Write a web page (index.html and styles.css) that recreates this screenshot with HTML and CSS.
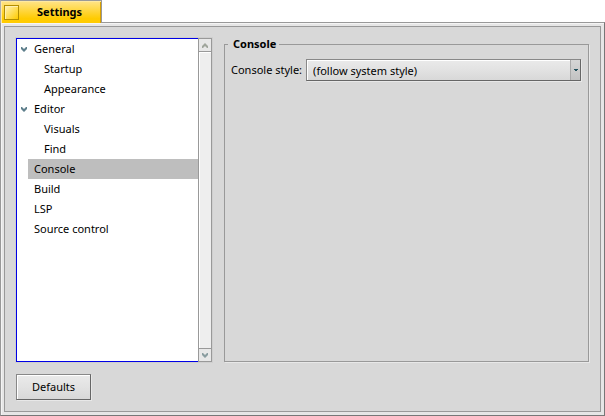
FILE: index.html
```html
<!DOCTYPE html>
<html lang="en">
<head>
<meta charset="utf-8">
<title>Settings</title>
<link rel="stylesheet" href="styles.css">
</head>
<body>
<div class="window">
  <header class="tab">
    <button class="close" aria-label="Close"></button>
    <h1 class="title">Settings</h1>
  </header>
  <div class="frame">
    <main class="content">
      <div class="panes">
        <nav class="tree" aria-label="Categories">
          <ul class="items">
            <li class="item parent"><svg class="arrow" viewBox="0 0 6 5"><path d="M0 0H1L3 2L5 0H6V2L3 5L0 2Z"/></svg><span class="name">General</span></li>
            <li class="item child"><span class="name">Startup</span></li>
            <li class="item child"><span class="name">Appearance</span></li>
            <li class="item parent"><svg class="arrow" viewBox="0 0 6 5"><path d="M0 0H1L3 2L5 0H6V2L3 5L0 2Z"/></svg><span class="name">Editor</span></li>
            <li class="item child"><span class="name">Visuals</span></li>
            <li class="item child"><span class="name">Find</span></li>
            <li class="item selected"><span class="name">Console</span></li>
            <li class="item"><span class="name">Build</span></li>
            <li class="item"><span class="name">LSP</span></li>
            <li class="item"><span class="name">Source control</span></li>
          </ul>
          <div class="scrollbar">
            <button class="step" aria-label="Scroll up"><svg class="step-arrow" viewBox="0 0 6 5"><path d="M0 5H1L3 3L5 5H6V3L3 0L0 3Z"/></svg></button>
            <div class="track"></div>
            <button class="step" aria-label="Scroll down"><svg class="step-arrow down" viewBox="0 0 6 5"><path d="M0 0H1L3 2L5 0H6V2L3 5L0 2Z"/></svg></button>
          </div>
        </nav>
        <fieldset class="group">
          <legend class="legend">Console</legend>
          <div class="field">
            <label class="label" for="style">Console style:</label>
            <div class="menu">
              <select class="select" id="style"><option>(follow system style)</option></select>
              <span class="menu-end"><svg class="menu-arrow" viewBox="0 0 4 2"><path d="M0 0H4V1H3V2H1V1H0Z"/></svg></span>
            </div>
          </div>
        </fieldset>
      </div>
      <button class="defaults">Defaults</button>
    </main>
  </div>
</div>
</body>
</html>
```
FILE: styles.css
```css
* { box-sizing: border-box; }
body {
  margin: 0;
  background: #fff;
  color: #000;
  font: 11px/20px "Noto Sans", sans-serif;
}
button, select { font: inherit; color: inherit; margin: 0; }
.window { display: flex; flex-direction: column; height: 100vh; }
.tab {
  position: relative;
  display: flex;
  align-items: center;
  align-self: flex-start;
  gap: 18px;
  height: 23px;
  margin-bottom: -1px;
  padding: 0 19px 0 3px;
  border: solid #999;
  border-width: 1px 1px 0;
  border-left-color: #b0b0b0;
  box-shadow: inset 1px 1px #ffe9a0, inset -1px 0 #d8a000;
  background: linear-gradient(#ffe48a, #ffcb00 80%);
}
.close {
  width: 15px;
  height: 15px;
  padding: 0;
  border: 1px solid #b38e00;
  box-shadow: inset 1px 1px #fff0b0;
  background: linear-gradient(135deg, #fff3b8, #ffcb00);
}
.title { margin: 0; font-size: 11px; line-height: 20px; font-weight: 700; }
.frame {
  flex: 1;
  display: flex;
  padding: 3px;
  border: 1px solid #999;
  border-right-color: #777;
  border-bottom-color: #777;
  background: #e6e6e6;
  box-shadow: inset 1px 1px #f4f4f4;
}
.content {
  flex: 1;
  display: flex;
  flex-direction: column;
  gap: 12px;
  padding: 11px;
  border: 1px solid #999;
  background: #d8d8d8;
}
.panes { flex: 1; display: flex; gap: 12px; }
.tree {
  display: flex;
  width: 196px;
  box-shadow: 0 0 0 1px #cfcfcf;
}
.items {
  flex: 1;
  margin: 0;
  padding: 0;
  list-style: none;
  background: #fff;
  border: 1px solid #0000e5;
  border-right: 0;
}
.item { display: flex; align-items: center; height: 20px; margin-left: 11px; padding-left: 6px; }
.parent { margin-left: 0; padding-left: 4px; gap: 7px; }
.child { padding-left: 16px; }
.selected { background: #bebebe; }
.arrow { width: 6px; height: 5px; fill: #5e7f8c; }
.scrollbar { display: flex; flex-direction: column; width: 14px; border: 1px solid #999; background: #eee; }
.step {
  display: flex;
  align-items: center;
  justify-content: center;
  height: 12px;
  padding: 0;
  border: 0;
  background: #e8e8e8;
}
.step-arrow { width: 6px; height: 5px; fill: #a0a69c; }
.down { fill: #8a9da0; }
.track { flex: 1; border: solid #999; border-width: 1px 0; box-shadow: inset 1px 1px #fff; }
.group {
  flex: 1;
  min-width: 0;
  margin: 0;
  padding: 9px 7px 9px 6px;
  border: 1px solid #999;
  box-shadow: 1px 1px #e8e8e8;
}
.legend { padding: 0 3px 0 5px; margin-left: -3px; line-height: 12px; font-weight: 700; }
.field { display: flex; align-items: center; gap: 4px; }
.menu { position: relative; flex: 1; display: flex; }
.select {
  appearance: none;
  flex: 1;
  height: 22px;
  padding: 1px 16px 0 6px;
  border: 1px solid #888;
  border-right-color: #666;
  border-bottom-color: #666;
  border-radius: 0;
  box-shadow: inset 1px 1px #fff, 1px 1px #e8e8e8;
  background: linear-gradient(#eaeaea, #e2e2e2 50%, #d8d8d8);
}
.menu-end {
  position: absolute;
  top: 1px;
  right: 1px;
  bottom: 1px;
  width: 10px;
  display: flex;
  align-items: center;
  justify-content: center;
  border-left: 1px solid #aaa;
  background: linear-gradient(#d6d6d6, #c2c2c2);
  pointer-events: none;
}
.menu-arrow { width: 4px; height: 2px; fill: #24525e; }
.defaults {
  align-self: flex-start;
  height: 26px;
  padding: 0 15px;
  border: 1px solid #888;
  border-right-color: #666;
  border-bottom-color: #666;
  box-shadow: inset 1px 1px #fff, 1px 1px #e8e8e8;
  background: linear-gradient(#eaeaea, #e2e2e2 50%, #d8d8d8);
}
```
